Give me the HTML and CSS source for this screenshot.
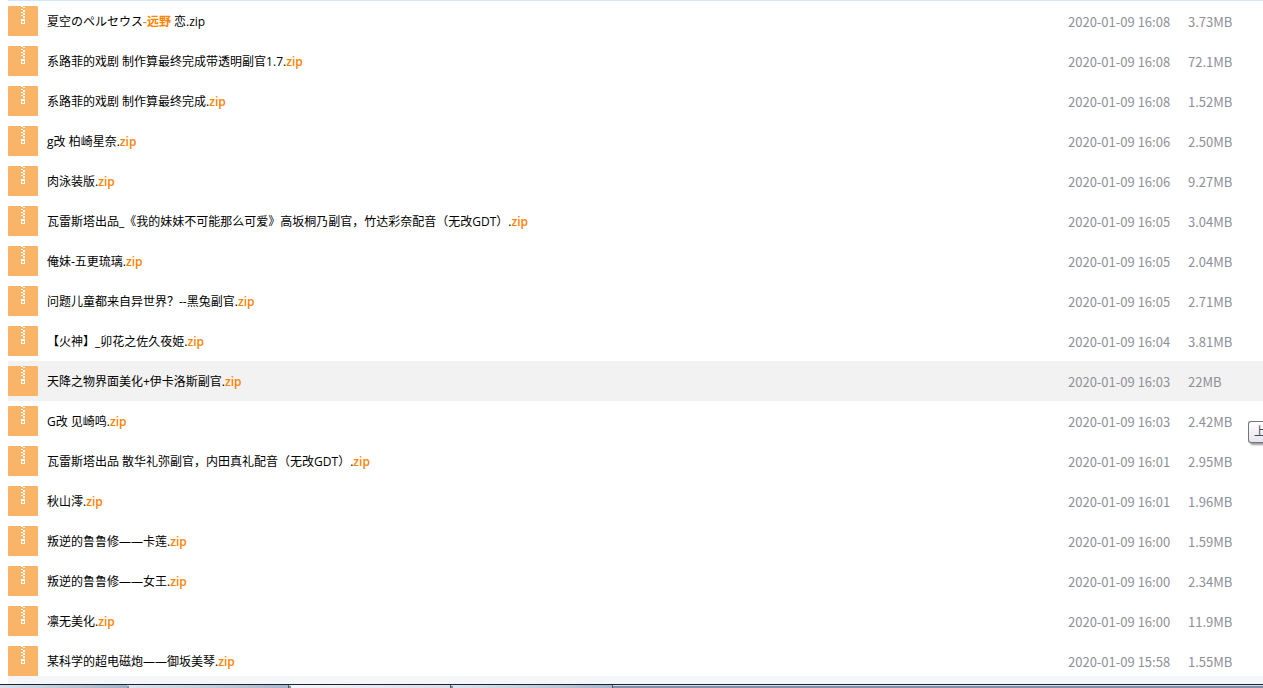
FILE: index.html
```
<!DOCTYPE html>
<html lang="zh-CN">
  <head>
    <meta charset="UTF-8" />
    <meta name="viewport" content="width=device-width, initial-scale=1.0" />
    <title>群文件</title>
    <link rel="stylesheet" href="styles.css">
  </head>
  <body>
    <svg class="sprite" aria-hidden="true">
      <symbol id="zip" viewBox="0 0 30 30">
        <rect width="30" height="30" rx="1" fill="#f9b467" />
        <path d="M13 0h2v1h-2zM15 1h2v1h-2zM13 3h2v1h-2zM15 4h2v2h-2zM13 6h2v1h-2zM15 7h2v2h-2zM13 9h2v1h-2zM15 10h2v2h-2z" fill="#fff" />
        <path d="M13 13h4v5h-4zM14 15v2h2v-2z" fill="#fff" fill-rule="evenodd" />
      </symbol>
    </svg>

    <main class="files">
      <table id="fileTable">
        <tbody>
          <tr>
            <td><div class="name"><svg class="icon"><use href="#zip" /></svg><span>夏空のペルセウス<em>-远野</em> 恋.zip</span></div></td>
            <td class="date">2020-01-09 16:08</td>
            <td class="size">3.73MB</td>
          </tr>
          <tr>
            <td><div class="name"><svg class="icon"><use href="#zip" /></svg><span>系路菲的戏剧 制作算最终完成带透明副官1.7.<em>zip</em></span></div></td>
            <td class="date">2020-01-09 16:08</td>
            <td class="size">72.1MB</td>
          </tr>
          <tr>
            <td><div class="name"><svg class="icon"><use href="#zip" /></svg><span>系路菲的戏剧 制作算最终完成.<em>zip</em></span></div></td>
            <td class="date">2020-01-09 16:08</td>
            <td class="size">1.52MB</td>
          </tr>
          <tr>
            <td><div class="name"><svg class="icon"><use href="#zip" /></svg><span>g改 柏崎星奈.<em>zip</em></span></div></td>
            <td class="date">2020-01-09 16:06</td>
            <td class="size">2.50MB</td>
          </tr>
          <tr>
            <td><div class="name"><svg class="icon"><use href="#zip" /></svg><span>肉泳装版.<em>zip</em></span></div></td>
            <td class="date">2020-01-09 16:06</td>
            <td class="size">9.27MB</td>
          </tr>
          <tr>
            <td><div class="name"><svg class="icon"><use href="#zip" /></svg><span>瓦雷斯塔出品_《我的妹妹不可能那么可爱》高坂桐乃副官，竹达彩奈配音（无改GDT）.<em>zip</em></span></div></td>
            <td class="date">2020-01-09 16:05</td>
            <td class="size">3.04MB</td>
          </tr>
          <tr>
            <td><div class="name"><svg class="icon"><use href="#zip" /></svg><span>俺妹-五更琉璃.<em>zip</em></span></div></td>
            <td class="date">2020-01-09 16:05</td>
            <td class="size">2.04MB</td>
          </tr>
          <tr>
            <td><div class="name"><svg class="icon"><use href="#zip" /></svg><span>问题儿童都来自异世界？--黑兔副官.<em>zip</em></span></div></td>
            <td class="date">2020-01-09 16:05</td>
            <td class="size">2.71MB</td>
          </tr>
          <tr>
            <td><div class="name"><svg class="icon"><use href="#zip" /></svg><span>【火神】_卯花之佐久夜姫.<em>zip</em></span></div></td>
            <td class="date">2020-01-09 16:04</td>
            <td class="size">3.81MB</td>
          </tr>
          <tr class="active">
            <td><div class="name"><svg class="icon"><use href="#zip" /></svg><span>天降之物界面美化+伊卡洛斯副官.<em>zip</em></span></div></td>
            <td class="date">2020-01-09 16:03</td>
            <td class="size">22MB</td>
          </tr>
          <tr>
            <td><div class="name"><svg class="icon"><use href="#zip" /></svg><span>G改 见崎鸣.<em>zip</em></span></div></td>
            <td class="date">2020-01-09 16:03</td>
            <td class="size">2.42MB</td>
          </tr>
          <tr>
            <td><div class="name"><svg class="icon"><use href="#zip" /></svg><span>瓦雷斯塔出品 散华礼弥副官，内田真礼配音（无改GDT）.<em>zip</em></span></div></td>
            <td class="date">2020-01-09 16:01</td>
            <td class="size">2.95MB</td>
          </tr>
          <tr>
            <td><div class="name"><svg class="icon"><use href="#zip" /></svg><span>秋山澪.<em>zip</em></span></div></td>
            <td class="date">2020-01-09 16:01</td>
            <td class="size">1.96MB</td>
          </tr>
          <tr>
            <td><div class="name"><svg class="icon"><use href="#zip" /></svg><span>叛逆的鲁鲁修——卡莲.<em>zip</em></span></div></td>
            <td class="date">2020-01-09 16:00</td>
            <td class="size">1.59MB</td>
          </tr>
          <tr>
            <td><div class="name"><svg class="icon"><use href="#zip" /></svg><span>叛逆的鲁鲁修——女王.<em>zip</em></span></div></td>
            <td class="date">2020-01-09 16:00</td>
            <td class="size">2.34MB</td>
          </tr>
          <tr>
            <td><div class="name"><svg class="icon"><use href="#zip" /></svg><span>凛无美化.<em>zip</em></span></div></td>
            <td class="date">2020-01-09 16:00</td>
            <td class="size">11.9MB</td>
          </tr>
          <tr>
            <td><div class="name"><svg class="icon"><use href="#zip" /></svg><span>某科学的超电磁炮——御坂美琴.<em>zip</em></span></div></td>
            <td class="date">2020-01-09 15:58</td>
            <td class="size">1.55MB</td>
          </tr>
        </tbody>
      </table>
    </main>

    <div class="tooltip" role="tooltip">上</div>

    <div class="statusbar"></div>
    <footer class="taskbar">
      <span class="start"></span>
      <span class="task"></span>
      <span class="task light"></span>
      <span class="task"></span>
    </footer>
  </body>
</html>
```

FILE: styles.css
```
* {
  box-sizing: border-box;
}

body {
  margin: 0;
  height: 100vh;
  display: flex;
  flex-direction: column;
  position: relative;
  overflow: hidden;
  background-color: #fff;
  color: #000;
  font-family: "Open Sans", "Noto Sans CJK SC", sans-serif;
  font-size: 12px;
}

.sprite {
  display: none;
}

.files {
  flex: 1;
  min-height: 0;
  margin-left: 8px;
  overflow: hidden;
  border-top: 1px solid #d2e6fc;
}

table {
  width: 100%;
  table-layout: fixed;
  border-collapse: collapse;
}

td {
  height: 40px;
  padding: 0;
  line-height: 20px;
  white-space: nowrap;
  vertical-align: middle;
}

.name {
  display: flex;
  align-items: center;
  gap: 9px;
}

.name span {
  padding-top: 2px;
}

.icon {
  flex: none;
  width: 30px;
  height: 30px;
}

em {
  font-style: normal;
  font-weight: 600;
  color: #ff8300;
}

.date,
.size {
  padding-top: 1px;
  font-family: "Noto Sans CJK SC", sans-serif;
  font-size: 13px;
  color: #8e9097;
}

.date {
  width: 120px;
}

.size {
  width: 75px;
}

tr:hover,
.active {
  background-color: #f2f2f2;
}

.tooltip {
  position: absolute;
  top: 421px;
  right: 0;
  width: 15px;
  height: 22px;
  padding-left: 5px;
  overflow: hidden;
  line-height: 20px;
  border: 1px solid #767676;
  border-right: 0;
  border-radius: 3px 0 0 3px;
  background: linear-gradient(#fff, #e4e5f0);
  box-shadow: 2px 2px 2px rgba(0, 0, 0, 0.4);
  color: #4c4c4c;
}

.statusbar {
  height: 8px;
  margin-left: 8px;
  background-color: #f5f6f8;
}

.taskbar {
  display: flex;
  gap: 2px;
  height: 4px;
  border-top: 1px solid #1b2433;
  background: linear-gradient(#d5dce8 1px, #8291aa 1px);
}

.start {
  width: 127px;
  background: linear-gradient(to right, #d9e0ea, #a3b1c4);
}

.task {
  width: 160px;
  border-right: 1px solid #4b5a70;
  background: linear-gradient(to right, #dde4ee, #a9b6c9);
}

.light {
  background: linear-gradient(to right, #f4f4f8, #dcdcea);
}
```
